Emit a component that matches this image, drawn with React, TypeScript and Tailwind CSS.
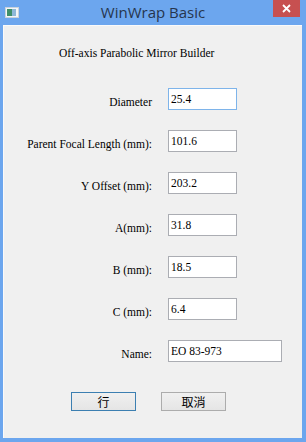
import React from "react";

const FIELDS = [
  { label: "Diameter", value: "25.4", focused: true },
  { label: "Parent Focal Length (mm):", value: "101.6" },
  { label: "Y Offset (mm):", value: "203.2" },
  { label: "A(mm):", value: "31.8" },
  { label: "B (mm):", value: "18.5" },
  { label: "C (mm):", value: "6.4" },
  { label: "Name:", value: "EO 83-973", wide: true },
];

const serif = "font-['Liberation_Serif','Times_New_Roman',serif]";

export default function App() {
  return (
    <div className="w-[306px] h-[442px] bg-[#6ca6ee] flex flex-col overflow-hidden">
      {/* Title bar */}
      <div className="h-[25px] shrink-0 flex items-start relative">
        <div className="absolute left-[5px] top-[7px]">
          <svg width="14" height="11" viewBox="0 0 14 11">
            <rect x="0.5" y="0.5" width="13" height="10" fill="#f4f6f8" stroke="#c9d3dc" />
            <rect x="2" y="2" width="5" height="7" fill="#3f8f6a" />
            <rect x="7" y="2" width="4" height="7" fill="#8fb8d8" />
          </svg>
        </div>
        <div className="flex-1 text-center pt-[2px] text-[15px] leading-[20px] text-[#26354d] font-['Open_Sans',sans-serif]">
          WinWrap Basic
        </div>
        <div className="absolute right-[6px] top-0 w-[27px] h-[17px] bg-[#c75050] flex items-center justify-center">
          <svg width="9" height="9" viewBox="0 0 9 9">
            <path d="M1 1 L8 8 M8 1 L1 8" stroke="#ffffff" strokeWidth="1.8" />
          </svg>
        </div>
      </div>

      {/* Client area */}
      <div className="flex-1 ml-[3px] mr-[4px] mb-[4px] bg-[#f0f0f0] border-t border-l border-[#fafafa] flex flex-col">
        <div className={`${serif} text-[11.5px] leading-[14px] text-black pl-[55px] mt-[20px]`}>
          Off-axis Parabolic Mirror Builder
        </div>

        <div className="mt-[28px] flex flex-col gap-[20px]">
          {FIELDS.map((f) => (
            <div key={f.label} className="flex items-start">
              <div className={`${serif} w-[148px] text-right text-[11.5px] leading-[15px] pt-[7px] text-black shrink-0`}>
                {f.label}
              </div>
              <div
                className={`ml-[16px] h-[22px] border bg-white px-[2px] pt-[3px] ${serif} text-[11.5px] leading-[14px] text-black ${
                  f.focused ? "border-[#7eb4ea]" : "border-[#abadb3]"
                } ${f.wide ? "w-[114px]" : "w-[69px]"}`}
              >
                {f.value}
              </div>
            </div>
          ))}
        </div>

        <div className="mt-[30px] flex pl-[67px] gap-[25px]">
          <button
            type="button"
            className="w-[65px] h-[19px] border border-[#3c7fb1] bg-gradient-to-b from-[#f0f0f0] to-[#e5e5e5] text-[12px] leading-[15px] text-black font-['Noto_Sans_CJK_TC','Noto_Sans_CJK_SC',sans-serif]"
          >
            行
          </button>
          <button
            type="button"
            className="w-[65px] h-[19px] border border-[#acacac] bg-gradient-to-b from-[#f0f0f0] to-[#e5e5e5] text-[12px] leading-[15px] text-black font-['Noto_Sans_CJK_TC','Noto_Sans_CJK_SC',sans-serif]"
          >
            取消
          </button>
        </div>
      </div>
    </div>
  );
}
